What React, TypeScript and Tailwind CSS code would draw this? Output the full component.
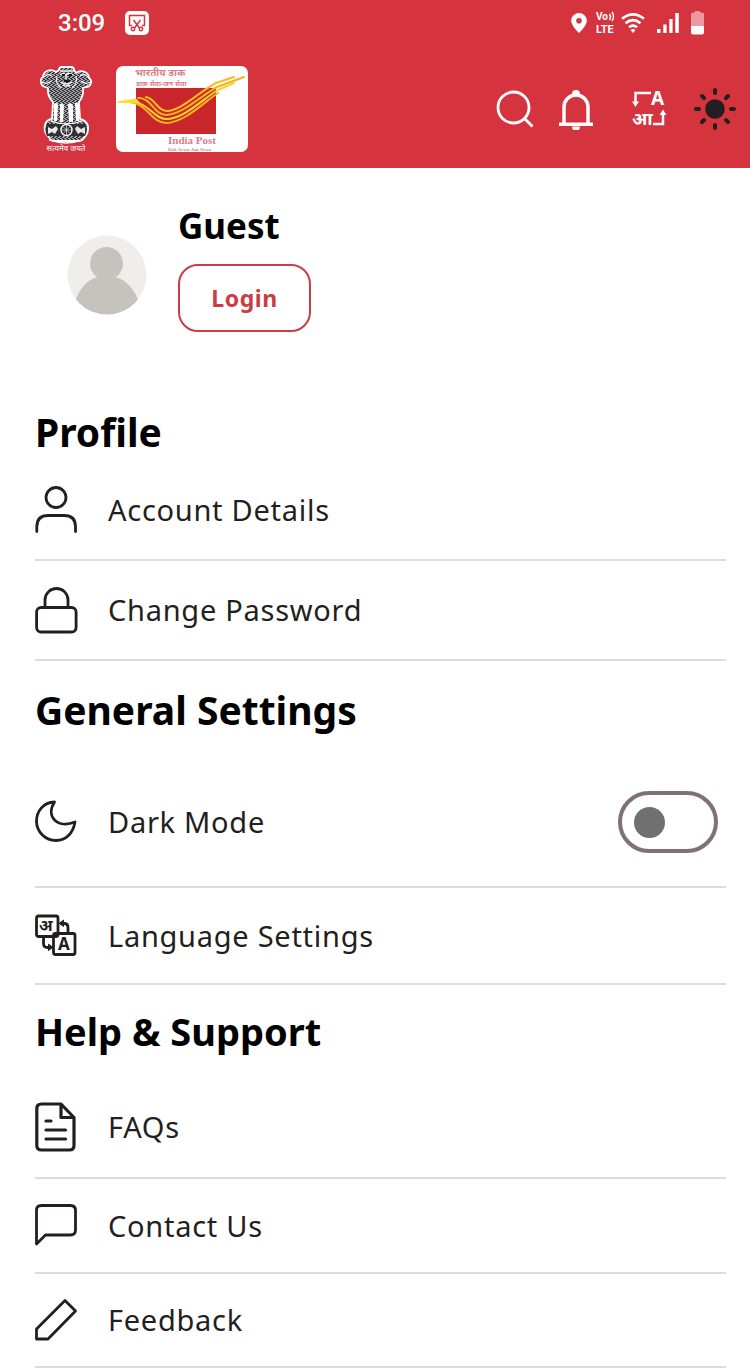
import type { ReactNode } from 'react';

function StatusBar() {
  return (
    <div className="flex h-[46px] items-center justify-between pl-[58px] pr-[46px]">
      <div className="flex items-center gap-5">
        <span className="font-['Roboto',sans-serif] text-2xl font-medium">3:09</span>
        <svg viewBox="0 0 24 24" className="size-6" fill="none" aria-hidden="true">
          <rect width="24" height="24" rx="5" fill="#fff" />
          <g stroke="#d5333e" strokeWidth="1.5">
            <path d="M7 14.5H4.5v-10h15v10H17" />
            <path d="M8.5 9l6 8M15.5 9l-6 8" />
            <circle cx="8" cy="18" r="1.7" />
            <circle cx="16" cy="18" r="1.7" />
          </g>
        </svg>
      </div>
      <div className="flex items-center">
        <svg viewBox="0 0 16 20" className="mr-2 h-5 w-4" aria-hidden="true">
          <path
            fill="#fff"
            fillRule="evenodd"
            d="M8 0a7.800 7.800 0 0 0-7.800 7.800C.2 13 8 20 8 20s7.800-7 7.800-12.200A7.800 7.800 0 0 0 8 0zm0 5a2.800 2.800 0 1 1 0 5.600A2.800 2.800 0 0 1 8 5z"
          />
        </svg>
        <svg viewBox="0 0 20 20" className="mr-1.5 size-5 overflow-visible" fill="#fff" aria-hidden="true">
          <text x="1" y="7" fontFamily="Roboto, sans-serif" fontSize="10" fontWeight="700">Vo</text>
          <path d="M14.500 1q2 3 0 6M17 -1q3 4.500 0 9" fill="none" stroke="#fff" strokeWidth="1.5" />
          <text x="1" y="20" fontFamily="Roboto, sans-serif" fontSize="11" fontWeight="700">LTE</text>
        </svg>
        <svg viewBox="0 0 24 20" className="mr-3 h-5 w-6" fill="none" stroke="#fff" strokeWidth="2.6" aria-hidden="true">
          <path d="M1 5.800q11-8.800 22 0M4.500 10.200q7.500-6 15 0M8 14.300q4-3.200 8 0" />
          <path d="M9.500 17l2.500-1.300 2.500 1.300L12 20z" fill="#fff" stroke="none" />
        </svg>
        <svg viewBox="0 0 22 20" className="mr-3 h-5 w-[22px]" fill="#fff" aria-hidden="true">
          <path d="M0 16h3.500v4H0zM6.300 11.500h3.300V20H6.300zM12.300 6h3.300v14h-3.300zM18.300 0h3.500v20h-3.500z" />
        </svg>
        <svg viewBox="0 0 13 24" className="h-6 w-[13px]" fill="#fff" aria-hidden="true">
          <path d="M4 0h5v1.500h2a2 2 0 0 1 2 2V15H0V3.500a2 2 0 0 1 2-2h2z" opacity=".5" />
          <path d="M0 15h13v6.500a2 2 0 0 1-2 2H2a2 2 0 0 1-2-2z" />
        </svg>
      </div>
    </div>
  );
}

function Emblem() {
  return (
    <svg viewBox="0 0 52 88" className="h-[88px] w-[52px] overflow-visible" role="img" aria-label="State Emblem of India">
      <defs>
        <pattern id="mane" width="4" height="4" patternUnits="userSpaceOnUse">
          <rect width="4" height="4" fill="#25252b" />
          <path d="M0 1q1 1.500 2 0t2 0M-1 3q1 1.500 2 0t2 0t2 0" fill="none" stroke="#d8d8da" strokeWidth=".8" />
        </pattern>
      </defs>
      <path
        d="M19 5q0-3 3-3h9q3 0 3 3l2 3q4-3 9-1 4 2 4 6 3 2 2 5-1 4-5 4l-3 1q1 8-4 14l1 17q6 1 8 7 1 7-4 12-2 3-6 3H15q-5 0-6-4-6-5-4-12 1-5 7-6l1-17q-6-6-5-14l-3-1q-4-1-4-5-1-3 2-5 0-4 4-6 5-2 9 1z"
        fill="url(#mane)"
        stroke="#fff"
        strokeWidth="1.8"
        strokeLinejoin="round"
      />
      <g fill="none" stroke="#f2f2f2" strokeWidth="1.2">
        <path d="M4 12q4-4 8-1M2 17q5 3 9-1M48 12q-4-4-8-1M50 17q-5 3-9-1" />
        <path d="M20 6h13M20 10q3-3 6 0 3-3 7 0M21 17q5 4 11 0M23 20q3 2 7 0M26 10v4" strokeWidth="1.5" />
        <path d="M17 11q-2 8 4 12M36 11q2 8-4 12" />
      </g>
      <path d="M22 9h3v2h-3zM29 9h3v2h-3zM24 15h6v2h-6z" fill="#18181c" />
      <path d="M14 39q4-3 4 2l-1 15h-3zM20 39q4-2 4 3l-1 15h-3zM28 39q4-2 5 2v16h-4zM35 38q4-1 4 4v14h-3z" fill="#fff" />
      <path d="M11 56q15 6 31 0M9 75q17 6 34 0" stroke="#fff" strokeWidth="1.3" fill="none" />
      <path d="M7 59h38q3 6 0 12H7q-3-6 0-12z" fill="#303035" />
      <circle cx="26.5" cy="65" r="5.5" fill="#25252b" stroke="#fff" strokeWidth="1.4" />
      <path d="M26.500 60v10M21.500 65h10M23 61.500l7 7M30 61.500l-7 7" stroke="#ddd" strokeWidth=".8" />
      <path d="M8 62l4 2 4-3 2 3-3 5-3-2-4 2zM45 62l-4 2-4-3-2 3 3 5 3-2 4 2z" fill="#e8e8e8" />
      <text x="26" y="86" textAnchor="middle" fontFamily="'Noto Sans', sans-serif" fontSize="8" fill="#fff">
        सत्यमेव जयते
      </text>
    </svg>
  );
}

function IndiaPostLogo() {
  return (
    <svg viewBox="0 0 132 86" className="h-[86px] w-[132px] overflow-visible" role="img" aria-label="India Post">
      <rect width="132" height="86" rx="7" fill="#fff" />
      <g fill="#dc7f88" fontFamily="'Noto Sans', sans-serif" fontWeight="700">
        <text x="19" y="10" fontSize="10">भारतीय डाक</text>
        <text x="20" y="20" fontSize="7">डाक सेवा-जन सेवा</text>
      </g>
      <rect x="20" y="22" width="80" height="46" fill="#c9262b" />
      <g fill="none" strokeLinecap="round" strokeWidth="2">
        <path d="M30 31C39 32 41 45 51 45C65 45 84 25 100 17L118 11" stroke="#fbbb21" />
        <path d="M22 32C35 31 38 49 50 49C66 49 86 29 101 21L128 11" stroke="#f9b01e" />
        <path d="M4 36C32 31 36 53 50 53C68 53 88 32 102 24L118 17" stroke="#fdd32c" />
        <path d="M14 36C31 38 36 57 50 57C68 57 88 36 102 27" stroke="#f9b01e" />
        <path d="M2 36L20 33L24 37z" fill="#fcdc2e" stroke="#fcdc2e" strokeWidth="1" />
      </g>
      <g fill="#dc7f88" fontFamily="'Liberation Serif', serif" fontWeight="700">
        <text x="52" y="78" fontSize="11">India Post</text>
        <text x="52" y="85" fontSize="5">Dak Sewa-Jan Sewa</text>
      </g>
    </svg>
  );
}

function AppBar() {
  return (
    <div className="flex h-[122px] items-center justify-between pl-10 pr-3.5 pt-1">
      <div className="flex items-center gap-6">
        <Emblem />
        <IndiaPostLogo />
      </div>
      <div className="flex items-center">
        <button type="button" aria-label="Search" className="mr-6">
          <svg viewBox="0 0 38 38" className="size-[38px]" fill="none" stroke="#fff" strokeWidth="2.8">
            <circle cx="17.5" cy="17.5" r="15.5" />
            <path d="M28.500 28.500l8 8" />
          </svg>
        </button>
        <button type="button" aria-label="Notifications" className="mr-[38px]">
          <svg viewBox="0 0 36 42" className="h-[42px] w-9" fill="none" stroke="#fff" strokeWidth="3.4">
            <path d="M6 36V19a12 12 0 0 1 24 0v17" />
            <path d="M1 36.200h34" />
            <path d="M14 6a4 4 0 0 1 8 0zM14 38.500h8a4 4 0 0 1-8 0z" fill="#fff" stroke="none" />
          </svg>
        </button>
        <button type="button" aria-label="Change language" className="mr-7">
          <svg viewBox="0 0 34 36" className="h-9 w-[34px] overflow-visible" fill="#fff">
            <path d="M19 2H3.500v10M21 33h10V22" fill="none" stroke="#fff" strokeWidth="2.5" />
            <path d="M0 10.500h7L3.500 16zM27.500 24h7L31 18.500z" />
            <text x="19" y="14" fontFamily="'Noto Sans', sans-serif" fontSize="19" fontWeight="700">A</text>
            <text x="0" y="34" fontFamily="'Noto Sans', sans-serif" fontSize="18" fontWeight="700">आ</text>
          </svg>
        </button>
        <button type="button" aria-label="Toggle theme">
          <svg viewBox="0 0 42 42" className="size-[42px]" fill="none" stroke="#231f20" strokeWidth="4" strokeLinecap="round">
            <circle cx="21" cy="21" r="9.8" fill="#231f20" stroke="none" />
            <path d="M21 2v3M21 37v3M2 21h3M37 21h3M8 8l2 2M32 32l2 2M34 8l-2 2M10 32l-2 2" />
          </svg>
        </button>
      </div>
    </div>
  );
}

function GuestCard() {
  return (
    <section className="flex items-center gap-[31px] pl-[67px] pt-[34px]">
      <svg viewBox="0 0 80 80" className="mt-4 size-20" role="img" aria-label="Guest avatar">
        <clipPath id="avatar">
          <circle cx="40" cy="40" r="39.5" />
        </clipPath>
        <g clipPath="url(#avatar)">
          <rect width="80" height="80" fill="#f0eeeb" />
          <circle cx="39.5" cy="28.5" r="16.5" fill="#c6c3bf" />
          <path d="M7 70Q14 46 31 42h17q17 4 25 28v12H7z" fill="#c6c3bf" />
        </g>
      </svg>
      <div className="flex flex-col items-start gap-3.5">
        <h1 className="text-[35px] leading-[48px] font-bold text-black">Guest</h1>
        <button
          type="button"
          className="h-[68px] w-[133px] rounded-[20px] border-2 border-[#cb3d45] text-[23px] font-bold tracking-wide text-[#cb3d45]"
        >
          Login
        </button>
      </div>
    </section>
  );
}

function Icon({ children }: { children: ReactNode }) {
  return (
    <svg
      viewBox="0 0 42 50"
      className="h-[50px] w-[42px] shrink-0 overflow-visible"
      fill="none"
      stroke="#231f20"
      strokeWidth="2.8"
      strokeLinecap="round"
      strokeLinejoin="round"
      aria-hidden="true"
    >
      {children}
    </svg>
  );
}

const icons = {
  user: (
    <Icon>
      <circle cx="21" cy="12.5" r="10" />
      <path d="M1.800 46.500v-5Q2 30.500 13 30.500h16Q40.500 30.500 40.500 41.500v5" />
    </Icon>
  ),
  lock: (
    <Icon>
      <rect x="1.6" y="22.5" width="39.5" height="24.5" rx="4.5" />
      <path d="M10 22v-7a11.500 11.500 0 0 1 23 0v7" />
    </Icon>
  ),
  moon: (
    <Icon>
      <path d="M19.500 5C8 5.500 1.500 14.500 1.500 24.500a19.500 19.500 0 0 0 19.500 19c10 0 17-7 19-18.500-17 7-30-5-20.500-20z" />
    </Icon>
  ),
  language: (
    <Icon>
      <rect x="1.5" y="5" width="21.5" height="20.5" rx="2" />
      <rect x="18.5" y="22.5" width="21.5" height="21" rx="2" />
      <path d="M8.500 26.500v6q0 4 4 4h3M33 21.500v-5q0-4-4-4h-3" />
      <path d="M13.500 33.500v6l4-3zM28.500 9.500v6l-4-3z" fill="#231f20" strokeWidth="1" />
      <g fill="#231f20" stroke="none" fontFamily="'Noto Sans', sans-serif" fontWeight="700">
        <text x="4" y="20" fontSize="16">अ</text>
        <text x="23" y="39" fontSize="17">A</text>
      </g>
    </Icon>
  ),
  file: (
    <Icon>
      <path d="M26 2H6.500Q1.800 2 1.800 6.500v37Q1.800 48 6.500 48h28q4.500 0 4.500-4.500V15.500zv13.500h13" strokeWidth="3.2" />
      <path d="M11 19h5M11 28h19.500M11 37h19.500" strokeWidth="3.2" />
    </Icon>
  ),
  chat: (
    <Icon>
      <path d="M1.500 43V9.500q0-5 5-5h29q5 0 5 5V29q0 5-5 5H10.500z" />
    </Icon>
  ),
  pencil: (
    <Icon>
      <path d="M1.500 34L30 5.500l10.500 10.500L13 44H1.500z" />
    </Icon>
  ),
};

const rowClass = 'flex items-center gap-[31px] border-b-2 border-[#dcdcdc] text-[29px] tracking-wide text-[#231f20]';

function MenuLink({ icon, label, className }: { icon: ReactNode; label: string; className: string }) {
  return (
    <li>
      <a href="#" className={`${rowClass} ${className}`}>
        {icon}
        {label}
      </a>
    </li>
  );
}

function Heading({ children, className }: { children: ReactNode; className: string }) {
  return <h2 className={`flex items-center leading-[56px] font-bold text-black ${className}`}>{children}</h2>;
}

export default function App() {
  return (
    <div className="bg-white font-['Noto_Sans',sans-serif]">
      <header className="bg-[#d5333e] text-white">
        <StatusBar />
        <AppBar />
      </header>
      <main>
        <GuestCard />
        <div className="pl-[35px] pr-6 pt-[72px]">
          <Heading className="h-14 text-[39px]">Profile</Heading>
          <ul>
            <MenuLink icon={icons.user} label="Account Details" className="h-[101px]" />
            <MenuLink icon={icons.lock} label="Change Password" className="h-[100px]" />
          </ul>
          <Heading className="h-[97px] text-[39px]">General Settings</Heading>
          <ul>
            <li className={`${rowClass} h-[130px]`}>
              {icons.moon}
              <label htmlFor="dark-mode" className="flex-1">Dark Mode</label>
              <input
                id="dark-mode"
                type="checkbox"
                role="switch"
                className="mr-2 flex h-[62px] w-[100px] appearance-none items-center rounded-full border-4 border-[#807173] px-3 before:block before:size-[31px] before:rounded-full before:bg-[#707070] before:content-[''] checked:justify-end"
              />
            </li>
            <MenuLink icon={icons.language} label="Language Settings" className="h-[97px]" />
          </ul>
          <Heading className="h-[92px] text-[38px]">Help &amp; Support</Heading>
          <ul>
            <MenuLink icon={icons.file} label="FAQs" className="h-[102px]" />
            <MenuLink icon={icons.chat} label="Contact Us" className="h-[95px]" />
            <MenuLink icon={icons.pencil} label="Feedback" className="h-[94px]" />
          </ul>
        </div>
      </main>
    </div>
  );
}
